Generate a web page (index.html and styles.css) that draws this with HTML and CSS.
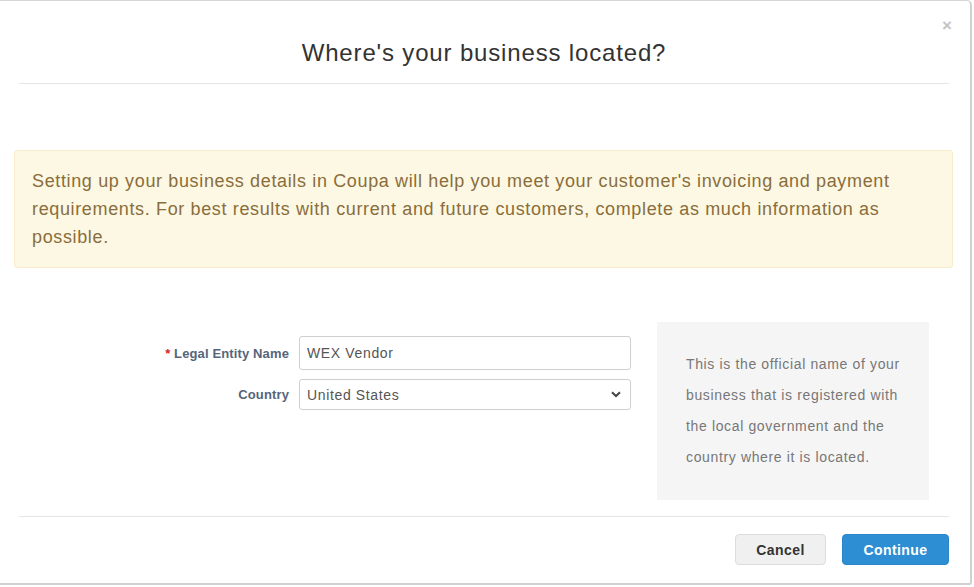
FILE: index.html
```html
<!DOCTYPE html>
<html>
<head>
<meta charset="utf-8">
<link rel="stylesheet" href="styles.css">
</head>
<body>
<div class="modal">
  <span class="close">×</span>
  <div class="modal-header">
    <h1 class="title">Where's your business located?</h1>
  </div>
  <div class="modal-body">
    <div class="alert">Setting up your business details in Coupa will help you meet your customer's invoicing and payment requirements. For best results with current and future customers, complete as much information as possible.</div>
    <div class="form-area">
      <div class="fields">
        <label class="label"><span class="req">*</span> Legal Entity Name</label>
        <div class="input">WEX Vendor</div>
        <label class="label">Country</label>
        <div class="select">
          <span>United States</span>
          <svg class="chev" width="10" height="7" viewBox="0 0 10 7"><path d="M1 1.2 L5 5 L9 1.2" fill="none" stroke="#444" stroke-width="2"/></svg>
        </div>
      </div>
      <div class="help">This is the official name of your business that is registered with the local government and the country where it is located.</div>
    </div>
  </div>
  <div class="modal-footer">
    <button class="btn btn-default">Cancel</button>
    <button class="btn btn-primary">Continue</button>
  </div>
</div>
</body>
</html>
```
FILE: styles.css
```css
html, body {
  margin: 0;
  padding: 0;
  background: #ffffff;
  font-family: "Liberation Sans", Arial, sans-serif;
}
.modal {
  position: relative;
  width: 972px;
  height: 585px;
  box-sizing: border-box;
  background: #fff;
  border-top: 1px solid #d6d6d6;
  border-right: 2px solid #d0d0d0;
  border-bottom: 2px solid #d0d0d0;
  border-top-right-radius: 5px;
  border-bottom-right-radius: 3px;
  letter-spacing: 0.04em;
}
.close {
  position: absolute;
  top: 15px;
  left: 942px;
  font-size: 17px;
  font-weight: bold;
  color: #c4c4c4;
  line-height: 20px;
  letter-spacing: 0;
}
.modal-header {
  margin: 0 21px 0 19px;
  height: 82px;
  border-bottom: 1px solid #e5e5e5;
  display: flex;
  align-items: flex-start;
  justify-content: center;
}
.title {
  margin: 37px 0 0 0;
  font-size: 24px;
  font-weight: normal;
  color: #333;
  line-height: 30px;
  letter-spacing: 0.035em;
}
.modal-body {
  padding: 66px 17px 0 14px;
  height: 366px;
}
.alert {
  background: #fcf8e3;
  border: 1px solid #faebcc;
  border-radius: 3px;
  color: #8a6d3b;
  font-size: 18px;
  line-height: 28px;
  padding: 16px 17px 16px 17px;
}
.form-area {
  display: flex;
  margin-top: 54px;
  padding-left: 0;
}
.fields {
  display: grid;
  grid-template-columns: 275px 332px;
  column-gap: 10px;
  row-gap: 9px;
  align-items: center;
  margin-top: 14px;
  align-self: flex-start;
}
.label {
  text-align: right;
  font-size: 13px;
  font-weight: bold;
  color: #56657a;
  letter-spacing: 0.01em;
}
.req {
  color: #d9241c;
}
.input, .select {
  box-sizing: border-box;
  border: 1px solid #cfcfcf;
  border-radius: 3px;
  background: #fff;
  font-size: 14px;
  color: #555;
  padding: 0 7px;
  display: flex;
  align-items: center;
}
.input {
  height: 34px;
}
.select {
  height: 31px;
  justify-content: space-between;
  padding-right: 9px;
}
.help {
  margin-left: 26px;
  width: 272px;
  height: 178px;
  box-sizing: border-box;
  background: #f5f5f5;
  color: #777;
  font-size: 14px;
  line-height: 31px;
  padding: 27px 20px 0 29px;
}
.modal-footer {
  margin: 0 21px 0 19px;
  border-top: 1px solid #e5e5e5;
  padding-top: 17px;
  display: flex;
  justify-content: flex-end;
  gap: 16px;
}
.btn {
  height: 31px;
  border-radius: 4px;
  font-family: "Liberation Sans", Arial, sans-serif;
  font-size: 14px;
  font-weight: bold;
  letter-spacing: 0.03em;
  cursor: pointer;
}
.btn-default {
  width: 91px;
  background: #f0f0f0;
  border: 1px solid #dcdcdc;
  color: #333;
}
.btn-primary {
  width: 107px;
  background: #2d8ed4;
  border: 1px solid #2a86c8;
  color: #fff;
}
```
